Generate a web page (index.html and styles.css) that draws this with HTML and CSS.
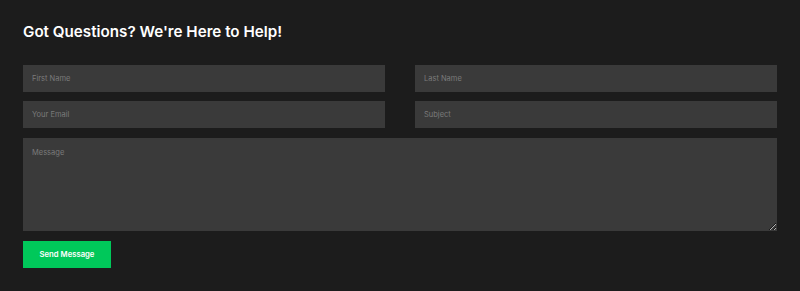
FILE: index.html
```html
<!DOCTYPE html>
<html lang="en">
<head>
  <meta charset="UTF-8">
  <title>Contact</title>
  <link rel="stylesheet" href="styles.css">
</head>
<body>
  <section class="contact">
    <h2>Got Questions? We're Here to Help!</h2>

    <form class="contact-form">
      <input type="text" placeholder="First Name">
      <input type="text" placeholder="Last Name">
      <input type="email" placeholder="Your Email">
      <input type="text" placeholder="Subject">
      <textarea class="full" placeholder="Message"></textarea>
      <div class="full">
        <button type="submit">Send Message</button>
      </div>
    </form>
  </section>
</body>
</html>
```

FILE: styles.css
```css
body {
  margin: 0;
  background-color: #1c1c1c;
  font-family: Inter, "Noto Sans", sans-serif;
}

.contact {
  padding: 22px 23px;
}

h2 {
  margin: 0 0 24px;
  font-size: 15.2px;
  font-weight: 600;
  color: #ffffff;
}

.contact-form {
  display: grid;
  grid-template-columns: 1fr 1fr;
  column-gap: 30px;
  row-gap: 9px;
}

.contact-form input,
.contact-form textarea {
  box-sizing: border-box;
  width: 100%;
  height: 27px;
  padding: 0 9px;
  border: none;
  background-color: #3a3a3a;
  color: #dddddd;
  font-family: inherit;
  font-size: 7.5px;
  outline: none;
}

.contact-form textarea {
  height: 93px;
  padding-top: 10px;
  margin-top: 1px;
}

.contact-form ::placeholder {
  color: #7a7a7a;
}

.full {
  grid-column: 1 / -1;
}

button {
  margin-top: 1px;
  width: 88px;
  height: 27px;
  border: none;
  background-color: #00c85a;
  color: #ffffff;
  font-family: inherit;
  font-size: 7.7px;
  font-weight: 600;
  cursor: pointer;
}
```
